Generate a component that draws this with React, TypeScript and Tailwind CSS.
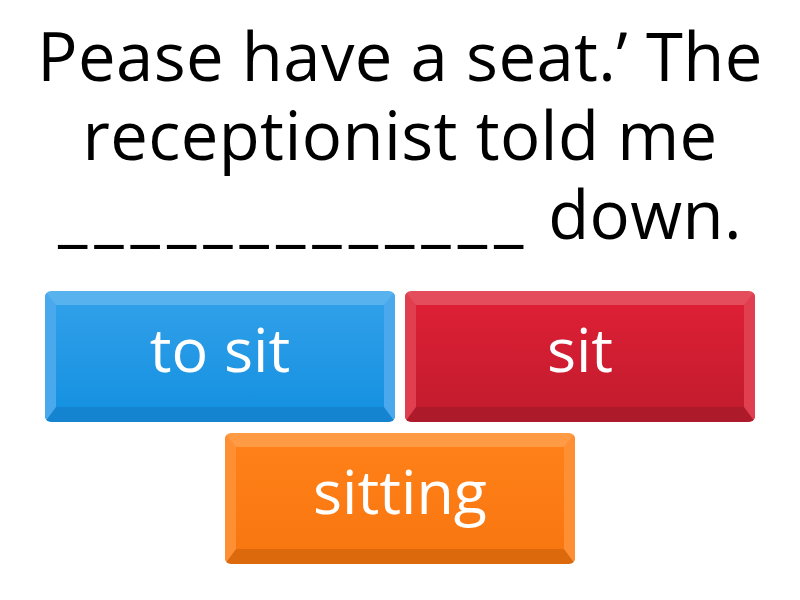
import React from 'react';

type Choice = {
  label: string;
  rim: string;
};

const choices: Choice[] = [
  {
    label: 'to sit',
    rim: 'border-t-[#58b2ee] border-x-[#4aa9ec] border-b-[#1483d0] bg-gradient-to-b from-[#2f9fe9] to-[#1592e1]',
  },
  {
    label: 'sit',
    rim: 'border-t-[#e44d5c] border-x-[#e03f50] border-b-[#ad1a2a] bg-gradient-to-b from-[#dd1f35] to-[#c41c2e]',
  },
];

const ChoiceButton: React.FC<{ choice: Choice }> = ({ choice }) => (
  <button
    className={`w-[350px] h-[131px] rounded-[6px] border-t-[14px] border-x-[11px] border-b-[15px] flex items-center justify-center text-white text-[61px] font-medium leading-none ${choice.rim}`}
  >
    <span className="-mt-[16px]">{choice.label}</span>
  </button>
);

const App: React.FC = () => {
  return (
    <div className="w-[800px] h-[600px] bg-white flex flex-col items-center font-['Open_Sans',sans-serif] [font-variant-ligatures:none]">
      {/* Question */}
      <h1 className="mt-[16px] w-[800px] text-center text-black text-[67px] leading-[79px] font-normal tracking-[0.4px]">
        Pease have a seat.’ The
        <br />
        receptionist told me
        <br />
        <span className="tracking-[7px]">_____________</span> down.
      </h1>

      {/* Answers */}
      <div className="mt-[38px] flex flex-col items-center gap-[11px]">
        <div className="flex gap-[10px]">
          {choices.map((c) => (
            <ChoiceButton key={c.label} choice={c} />
          ))}
        </div>
        <ChoiceButton
          choice={{
            label: 'sitting',
            rim: 'border-t-[#ff9a45] border-x-[#ff8f35] border-b-[#dc6a0c] bg-gradient-to-b from-[#ff8018] to-[#f97710]',
          }}
        />
      </div>
    </div>
  );
};

export default App;
